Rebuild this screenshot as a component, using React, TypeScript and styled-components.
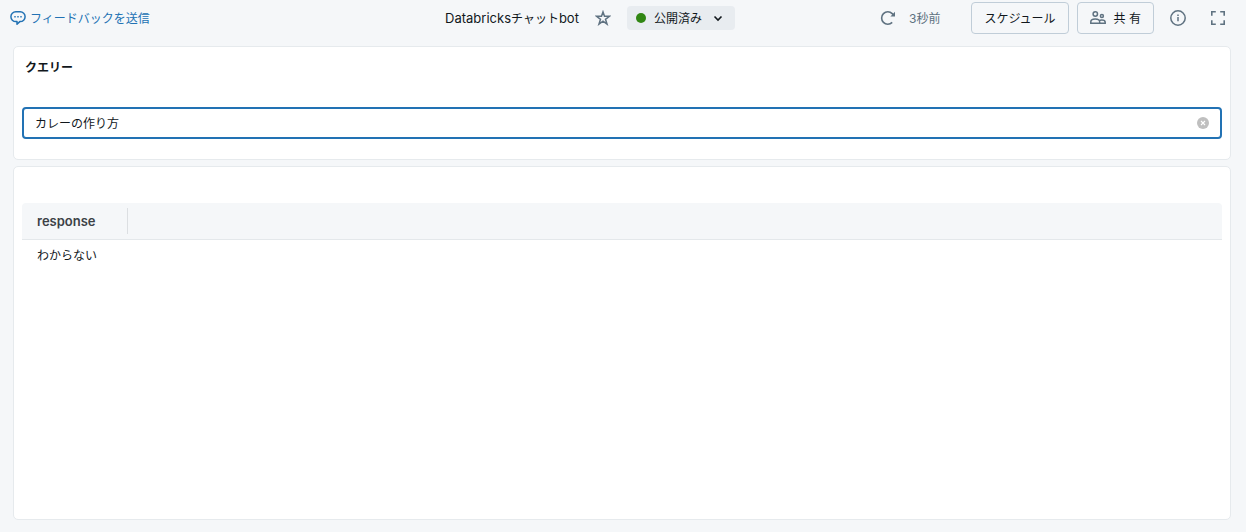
import React, { useState } from "react";
import styled, { createGlobalStyle } from "styled-components";

const GlobalStyle = createGlobalStyle`
  *, *::before, *::after { box-sizing: border-box; }
  body {
    margin: 0;
    background: #f5f7f9;
    color: #11171c;
    font-family: "Noto Sans CJK JP", Inter, sans-serif;
    font-size: 12px;
    line-height: 20px;
  }
  button, input { font: inherit; color: inherit; }
`;

const Page = styled.div`
  display: flex;
  flex-direction: column;
  min-height: 100vh;
`;

const Header = styled.header`
  display: flex;
  align-items: center;
  height: 36px;
  padding: 0 20px 0 10px;
`;

const HeaderMain = styled.div`
  flex: 1;
  display: grid;
  grid-template-columns: 1fr auto 1fr;
  align-items: center;
`;

const Group = styled.div<{ $gap: number }>`
  display: flex;
  align-items: center;
  gap: ${(p) => p.$gap}px;
`;

const Actions = styled(Group)`
  justify-content: flex-end;
  padding-right: 16px;
`;

const FeedbackLink = styled.a`
  display: flex;
  align-items: center;
  gap: 4px;
  color: #2272b4;
  text-decoration: none;
  white-space: nowrap;
`;

const Title = styled.h1`
  margin: 0;
  font-family: Inter, "Noto Sans CJK JP", sans-serif;
  font-size: 13px;
  font-weight: 400;
  line-height: 20px;
  white-space: nowrap;
`;

const Kana = styled.span`
  font-size: 12px;
`;

const Latin = styled.span`
  font-family: Inter, sans-serif;
`;

const IconButton = styled.button`
  display: flex;
  padding: 0;
  border: 0;
  background: none;
  color: #5f7281;
  cursor: pointer;
`;

const StatusButton = styled.button`
  display: flex;
  align-items: center;
  height: 24px;
  padding: 0 9px;
  border: 0;
  border-radius: 4px;
  background: #e8ecf0;
  white-space: nowrap;
  cursor: pointer;
`;

const StatusDot = styled.span`
  width: 10px;
  height: 10px;
  margin-right: 8px;
  border-radius: 50%;
  background: #308613;
`;

const StatusText = styled.span`
  margin-right: 8px;
`;

const Refresh = styled(Group)`
  margin-right: 23px;
  color: #5f7281;
  white-space: nowrap;
`;

const OutlineButton = styled.button`
  display: flex;
  align-items: center;
  gap: 8px;
  height: 32px;
  padding: 0 12px;
  border: 1px solid #c0cdd8;
  border-radius: 4px;
  background: transparent;
  white-space: nowrap;
  cursor: pointer;

  svg { color: #5f7281; }
`;

const Panels = styled.main`
  flex: 1;
  display: flex;
  flex-direction: column;
  gap: 6px;
  padding: 10px 15px 12px 13px;
`;

const Panel = styled.section<{ $grow?: boolean }>`
  flex: ${(p) => (p.$grow ? "1" : "none")};
  padding: ${(p) => (p.$grow ? "36px 8px 8px" : "10px 8px 20px")};
  border: 1px solid #e6eaed;
  border-radius: 5px;
  background: #fff;
`;

const FieldLabel = styled.label`
  display: block;
  margin: 0 3px 30px;
  font-weight: 600;
`;

const Field = styled.div`
  display: flex;
  align-items: center;
  height: 32px;
  padding: 0 11px;
  border: 2px solid #2272b4;
  border-radius: 4px;
`;

const TextInput = styled.input`
  flex: 1;
  min-width: 0;
  padding: 0;
  border: 0;
  outline: 0;
  background: transparent;
`;

const ClearButton = styled(IconButton)`
  color: #bfbfbf;
`;

const Table = styled.table`
  width: 100%;
  border-collapse: separate;
  border-spacing: 0;
`;

const HeadCell = styled.th`
  height: 37px;
  padding: 5px 0;
  border-bottom: 1px solid #e4e8eb;
  border-radius: 4px 4px 0 0;
  background: #f5f7f9;
  color: #3c4146;
  font-family: Inter, sans-serif;
  font-size: 13px;
  font-weight: 600;
  text-align: left;
`;

const HeadLabel = styled.span`
  display: block;
  width: 106px;
  padding-left: 15px;
  border-right: 1px solid #dcdfe2;
  line-height: 26px;
`;

const Cell = styled.td`
  padding: 5px 15px;
`;

const ChatIcon = () => (
  <svg width="16" height="16" viewBox="0 0 16 16" fill="none" stroke="currentColor" strokeWidth="1.5" aria-hidden="true">
    <path d="M5.8 1.8h4.4a4.9 4.9 0 0 1 0 9.8H9.8L7 14.3v-2.7H5.8a4.9 4.9 0 0 1 0-9.8Z" strokeLinejoin="round" />
    <path d="M4.3 6h1.4v1.4H4.3zM7.3 6h1.4v1.4H7.3zM10.3 6h1.4v1.4h-1.4z" fill="currentColor" stroke="none" />
  </svg>
);

const StarIcon = () => (
  <svg width="16" height="16" viewBox="0 0 16 16" fill="none" stroke="currentColor" strokeWidth="1.5" aria-hidden="true">
    <path d="m8 1.9 1.5 4.3 5 .1-4 3 1.5 4.8L8 11.2l-4 2.9 1.5-4.8-4-3 5-.1Z" />
  </svg>
);

const ChevronIcon = () => (
  <svg width="16" height="16" viewBox="0 0 16 16" fill="none" stroke="currentColor" strokeWidth="1.6" aria-hidden="true">
    <path d="m4.5 6.5 3.5 3.5 3.5-3.5" />
  </svg>
);

const RefreshIcon = () => (
  <svg width="16" height="16" viewBox="0 0 16 16" fill="none" stroke="currentColor" strokeWidth="1.6" aria-hidden="true">
    <path d="M12.2 12.4A6.2 6.2 0 1 1 12.2 3.6L13.4 4.8" />
    <path d="M15 1.8v4.6h-4.6Z" fill="currentColor" stroke="none" />
  </svg>
);

const PeopleIcon = () => (
  <svg width="16" height="16" viewBox="0 0 16 16" fill="none" stroke="currentColor" strokeWidth="1.5" aria-hidden="true">
    <circle cx="5.3" cy="4" r="2.2" />
    <circle cx="11.9" cy="5.9" r="1.5" />
    <path d="M9.7 13.3H.8v-1.5C.8 10.1 2.9 9 5.2 9s4.5 1.1 4.5 2.8ZM9.7 13.3h5.5v-1.1c0-1.3-1.5-2.2-3.4-2.2-1.1 0-2 .3-2.6.8" />
  </svg>
);

const InfoIcon = () => (
  <svg width="16" height="16" viewBox="0 0 16 16" fill="none" stroke="currentColor" strokeWidth="1.5" aria-hidden="true">
    <circle cx="8" cy="8" r="7.2" />
    <path d="M8 7v4.2M8 4.4v1.5" />
  </svg>
);

const FullscreenIcon = () => (
  <svg width="16" height="16" viewBox="0 0 16 16" fill="none" stroke="currentColor" strokeWidth="1.6" aria-hidden="true">
    <path d="M1.8 5.8v-4h4M10.2 1.8h4v4M14.2 10.2v4h-4M5.8 14.2h-4v-4" />
  </svg>
);

const ClearIcon = () => (
  <svg width="12" height="12" viewBox="0 0 12 12" aria-hidden="true">
    <circle cx="6" cy="6" r="6" fill="currentColor" />
    <path d="m4 4 4 4m0-4L4 8" stroke="#fff" strokeWidth="1.1" />
  </svg>
);

export default function App() {
  const [query, setQuery] = useState("カレーの作り方");

  return (
    <>
      <GlobalStyle />
      <Page>
        <Header>
          <HeaderMain>
            <Group $gap={0}>
              <FeedbackLink href="#feedback">
                <ChatIcon />
                フィードバックを送信
              </FeedbackLink>
            </Group>
            <Group $gap={16}>
              <Title>
                Databricks<Kana>チャット</Kana>bot
              </Title>
              <IconButton type="button" aria-label="お気に入り">
                <StarIcon />
              </IconButton>
              <StatusButton type="button">
                <StatusDot />
                <StatusText>公開済み</StatusText>
                <ChevronIcon />
              </StatusButton>
            </Group>
            <Actions $gap={8}>
              <Refresh $gap={13}>
                <IconButton type="button" aria-label="更新">
                  <RefreshIcon />
                </IconButton>
                <span>
                  <Latin>3</Latin>秒前
                </span>
              </Refresh>
              <OutlineButton type="button">スケジュール</OutlineButton>
              <OutlineButton type="button">
                <PeopleIcon />
                <span>
                  共<Latin> </Latin>有
                </span>
              </OutlineButton>
            </Actions>
          </HeaderMain>
          <Group $gap={24}>
            <IconButton type="button" aria-label="情報">
              <InfoIcon />
            </IconButton>
            <IconButton type="button" aria-label="全画面表示">
              <FullscreenIcon />
            </IconButton>
          </Group>
        </Header>
        <Panels>
          <Panel>
            <FieldLabel htmlFor="query">クエリー</FieldLabel>
            <Field>
              <TextInput id="query" type="text" value={query} onChange={(e) => setQuery(e.target.value)} />
              <ClearButton type="button" aria-label="クリア" onClick={() => setQuery("")}>
                <ClearIcon />
              </ClearButton>
            </Field>
          </Panel>
          <Panel $grow>
            <Table>
              <thead>
                <tr>
                  <HeadCell scope="col">
                    <HeadLabel>response</HeadLabel>
                  </HeadCell>
                </tr>
              </thead>
              <tbody>
                <tr>
                  <Cell>わからない</Cell>
                </tr>
              </tbody>
            </Table>
          </Panel>
        </Panels>
      </Page>
    </>
  );
}
